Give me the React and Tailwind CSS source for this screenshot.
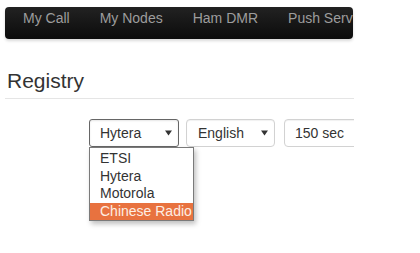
import React from "react";

const navItems = ["My Call", "My Nodes", "Ham DMR", "Push Services"];
const radioTypes = ["ETSI", "Hytera", "Motorola", "Chinese Radio"];

function Caret() {
  return (
    <svg width="7" height="6" viewBox="0 0 7 6" className="shrink-0">
      <path d="M0 0.5 L7 0.5 L3.5 5.5 Z" fill="#333" />
    </svg>
  );
}

export default function App() {
  return (
    <div className="w-[420px] h-[253px] bg-white pl-[5px] pt-[7px] font-['Liberation_Sans',Arial,sans-serif] text-[14px] text-[#333]">
      <div className="w-[349px]">
        {/* top navbar */}
        <div className="h-[32px] w-[348px] rounded-[4px] overflow-hidden bg-gradient-to-b from-[#222222] to-[#0c0c0c] shadow-[0_2px_3px_rgba(0,0,0,0.15)] flex pl-[3px] whitespace-nowrap">
          {navItems.map((item) => (
            <div key={item} className="shrink-0 px-[15px] pt-[1px] leading-5 text-[#9d9d9d]">
              {item}
            </div>
          ))}
        </div>

        {/* page header */}
        <div className="mt-[30px] h-[30px] border-b border-[#e5e5e5] pl-[2px]">
          <h3 className="text-[21px] leading-[23px] text-[#333]">Registry</h3>
        </div>

        {/* controls */}
        <div className="mt-[20px] overflow-x-clip">
          <div className="ml-[84px] flex whitespace-nowrap">
            <div className="relative shrink-0">
              <div className="w-[90px] h-[28px] border border-[#666] rounded-[3px] shadow-[inset_0_1px_2px_rgba(0,0,0,0.1)] flex items-center justify-between pl-[10px] pr-[6px]">
                <span>Hytera</span>
                <Caret />
              </div>
              <div className="absolute left-0 top-[28px] z-10 w-[105px] bg-white border border-[#7a7a7a] pt-[2px] shadow-[2px_3px_5px_rgba(0,0,0,0.25)]">
                {radioTypes.map((t) => (
                  <div
                    key={t}
                    className={
                      t === "Chinese Radio"
                        ? "leading-[17.5px] pl-[10px] bg-[#e8723f] text-[#fdeee4]"
                        : "leading-[17.5px] pl-[10px] text-[#333]"
                    }
                  >
                    {t}
                  </div>
                ))}
              </div>
            </div>

            <div className="shrink-0 ml-[7px] w-[89px] h-[28px] border border-[#d2d2d2] rounded-[4px] shadow-[inset_0_1px_1px_rgba(0,0,0,0.06)] flex items-center justify-between pl-[11px] pr-[6px]">
              <span>English</span>
              <Caret />
            </div>

            <div className="shrink-0 ml-[9px] w-[100px] h-[28px] border border-[#d2d2d2] rounded-[4px] shadow-[inset_0_1px_1px_rgba(0,0,0,0.06)] flex items-center pl-[10px]">
              150 sec
            </div>
          </div>
        </div>
      </div>
    </div>
  );
}
